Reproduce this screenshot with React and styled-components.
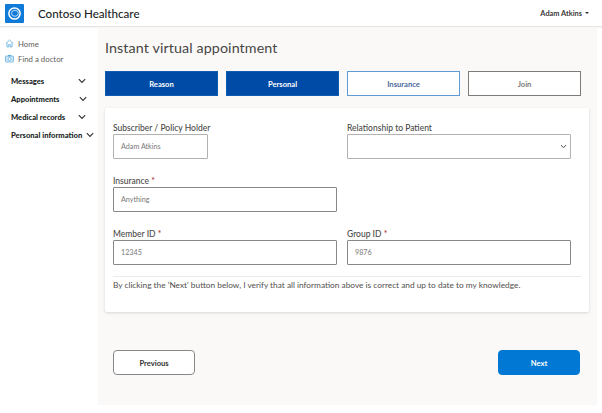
import React from "react";
import styled, { createGlobalStyle } from "styled-components";

const Global = createGlobalStyle`
  html, body { margin: 0; padding: 0; background: #fff; }
  body { font-family: Lato, "Open Sans", "Liberation Sans", sans-serif; color: #323130; }
  * { box-sizing: border-box; }
`;
const Page = styled.div`width: 602px; height: 413px; overflow: hidden; background: #fff; display: flex; flex-direction: column;`;
const Header = styled.header`
  height: 27px; flex: none; display: flex; align-items: center; padding: 0 13px 0 5px;
  border-bottom: 1px solid #e6e5e4; box-shadow: 0 1px 1px rgba(0,0,0,.04);
`;
const Logo = styled.div`width: 19px; height: 19px; border-radius: 1px; background: #0f7ad8; display: flex; align-items: center; justify-content: center;`;
const Brand = styled.div`margin-left: 14px; font-size: 11.6px; font-weight: 500; color: #201f1e; flex: 1;`;
const User = styled.div`font-size: 7.4px; font-weight: 700; color: #3b3a39; display: flex; align-items: center; gap: 3px;`;
const Caret = styled.span`width: 0; height: 0; border-left: 2px solid transparent; border-right: 2px solid transparent; border-top: 2px solid #323130;`;
const Body = styled.div`flex: 1; display: flex; min-height: 0;`;
const Side = styled.nav`width: 98px; flex: none; padding-top: 9px;`;
const Link = styled.div`height: 15px; padding-left: 5px; display: flex; align-items: center; gap: 4px; font-size: 7.8px; color: #5f5e5c;`;
const Groups = styled.div`margin-top: 6px; display: flex; flex-direction: column;`;
const Group = styled.div`height: 18px; padding-left: 11px; display: flex; align-items: center; font-size: 7.6px; font-weight: 900; color: #201f1e; white-space: nowrap;`;
const Chevron = styled.svg`margin-left: ${p => p.$gap}px; flex: none;`;
const Main = styled.main`width: 499px; height: 378px; flex: none; background: #faf9f8; padding: 11px 8px 0 7px;`;
const Title = styled.h1`margin: 0; font-size: 14.3px; font-weight: 400; line-height: 20px; color: #484644; letter-spacing: .1px;`;
const Steps = styled.div`margin-top: 13px; display: grid; grid-template-columns: repeat(4, 113px); gap: 8px;`;
const Step = styled.div`
  height: 25px; display: flex; align-items: center; justify-content: center; font-size: 7.6px; font-weight: 700;
  background: ${p => p.$state === "done" ? "#004ba5" : "#fff"};
  color: ${p => p.$state === "done" ? "#fff" : p.$state === "current" ? "#4a6a9c" : "#7a7977"};
  border: 1px solid ${p => p.$state === "done" ? "#0f5cb0" : p.$state === "current" ? "#5f9ad6" : "#7d7c7a"};
`;
const Card = styled.section`
  margin-top: 12px; width: 484px; height: 204px; background: #fff; border-radius: 2px; padding: 14px 8px 0;
  box-shadow: 0 1px 3px rgba(0,0,0,.14);
`;
const Grid = styled.div`display: grid; grid-template-columns: 224px 224px; column-gap: 10px; row-gap: 16px;`;
const Field = styled.div`display: flex; flex-direction: column;`;
const Label = styled.label`font-size: 8.5px; font-weight: 500; line-height: 12px; color: #4a4948; height: 12px;`;
const Star = styled.span`color: #a4262c;`;
const Input = styled.div`
  height: 25px; width: ${p => p.$w || "100%"}; padding: 0 ${p => p.$select ? 3 : 7}px 0 7px; display: flex; align-items: center; justify-content: space-between;
  font-size: 7.2px; color: #7a7978; background: #fff; border-radius: 1px;
  border: 1px solid ${p => p.$strong ? "#8a8886" : "#b3b1af"};
`;
const Divider = styled.hr`margin: 11px 0 0; border: 0; border-top: 1px solid #edebe9;`;
const Note = styled.p`margin: 2px 0 0; font-size: 8.3px; line-height: 12px; color: #514f4d;`;
const Actions = styled.div`margin-top: 38px; padding: 0 9px 0 8px; display: flex; justify-content: space-between;`;
const Btn = styled.button`
  width: 82px; height: 25px; border-radius: 4px; font: 700 7.6px Lato, sans-serif;
  background: ${p => p.$primary ? "#0078d4" : "#fff"}; color: ${p => p.$primary ? "#fff" : "#323130"};
  border: 1px solid ${p => p.$primary ? "#0078d4" : "#8a8886"};
`;
const Right = styled.div`flex: 1;`;

const Down = ({ gap }) => (
  <Chevron $gap={gap} width="8" height="6" viewBox="0 0 8 6"><path d="M.8 1.2 4 4.4l3.2-3.2" fill="none" stroke="#323130" strokeWidth="1.1" /></Chevron>
);

export default function App() {
  return (
    <Page>
      <Global />
      <Header>
        <Logo>
          <svg width="15" height="15" viewBox="0 0 15 15">
            <circle cx="7.5" cy="7.5" r="5.6" fill="none" stroke="#fff" strokeWidth="1.5" />
            <ellipse cx="7.9" cy="7.3" rx="3.4" ry="3" fill="none" stroke="#bfe0f7" strokeWidth="1" />
          </svg>
        </Logo>
        <Brand>Contoso Healthcare</Brand>
        <User>Adam Atkins <Caret /></User>
      </Header>
      <Body>
        <Side>
          <Link>
            <svg width="9" height="9" viewBox="0 0 9 9"><path d="M.8 4.6 4.5 1l3.7 3.6M2 3.8V8h1.7V5.6h1.6V8H7V3.8" fill="none" stroke="#5aa9dc" strokeWidth=".8" /></svg>
            Home
          </Link>
          <Link>
            <svg width="9" height="9" viewBox="0 0 9 9"><rect x=".5" y="2" width="8" height="6" rx=".8" fill="#cfe6f6" stroke="#5aa9dc" strokeWidth=".7" /><rect x="3" y=".9" width="3" height="1.3" fill="#5aa9dc" /><circle cx="4.5" cy="5" r="1.5" fill="#fff" stroke="#5aa9dc" strokeWidth=".7" /></svg>
            Find a doctor
          </Link>
          <Groups>
            <Group>Messages<Down gap={34} /></Group>
            <Group>Appointments<Down gap={20} /></Group>
            <Group>Medical records<Down gap={13} /></Group>
            <Group>Personal information<Down gap={4} /></Group>
          </Groups>
        </Side>
        <Main>
          <Title>Instant virtual appointment</Title>
          <Steps>
            <Step $state="done">Reason</Step>
            <Step $state="done">Personal</Step>
            <Step $state="current">Insurance</Step>
            <Step>Join</Step>
          </Steps>
          <Card>
            <Grid>
              <Field>
                <Label>Subscriber / Policy Holder</Label>
                <Input $w="95px">Adam Atkins</Input>
              </Field>
              <Field>
                <Label>Relationship to Patient</Label>
                <Input $select>
                  <span />
                  <svg width="7" height="5" viewBox="0 0 7 5"><path d="M1 1.2 3.5 3.6 6 1.2" fill="none" stroke="#4a4948" strokeWidth="1" /></svg>
                </Input>
              </Field>
              <Field>
                <Label>Insurance <Star>*</Star></Label>
                <Input $strong>Anything</Input>
              </Field>
              <div />
              <Field>
                <Label>Member ID <Star>*</Star></Label>
                <Input $strong>12345</Input>
              </Field>
              <Field>
                <Label>Group ID <Star>*</Star></Label>
                <Input $strong>9876</Input>
              </Field>
            </Grid>
            <Divider />
            <Note>By clicking the 'Next' button below, I verify that all information above is correct and up to date to my knowledge.</Note>
          </Card>
          <Actions>
            <Btn>Previous</Btn>
            <Btn $primary>Next</Btn>
          </Actions>
        </Main>
        <Right />
      </Body>
    </Page>
  );
}
